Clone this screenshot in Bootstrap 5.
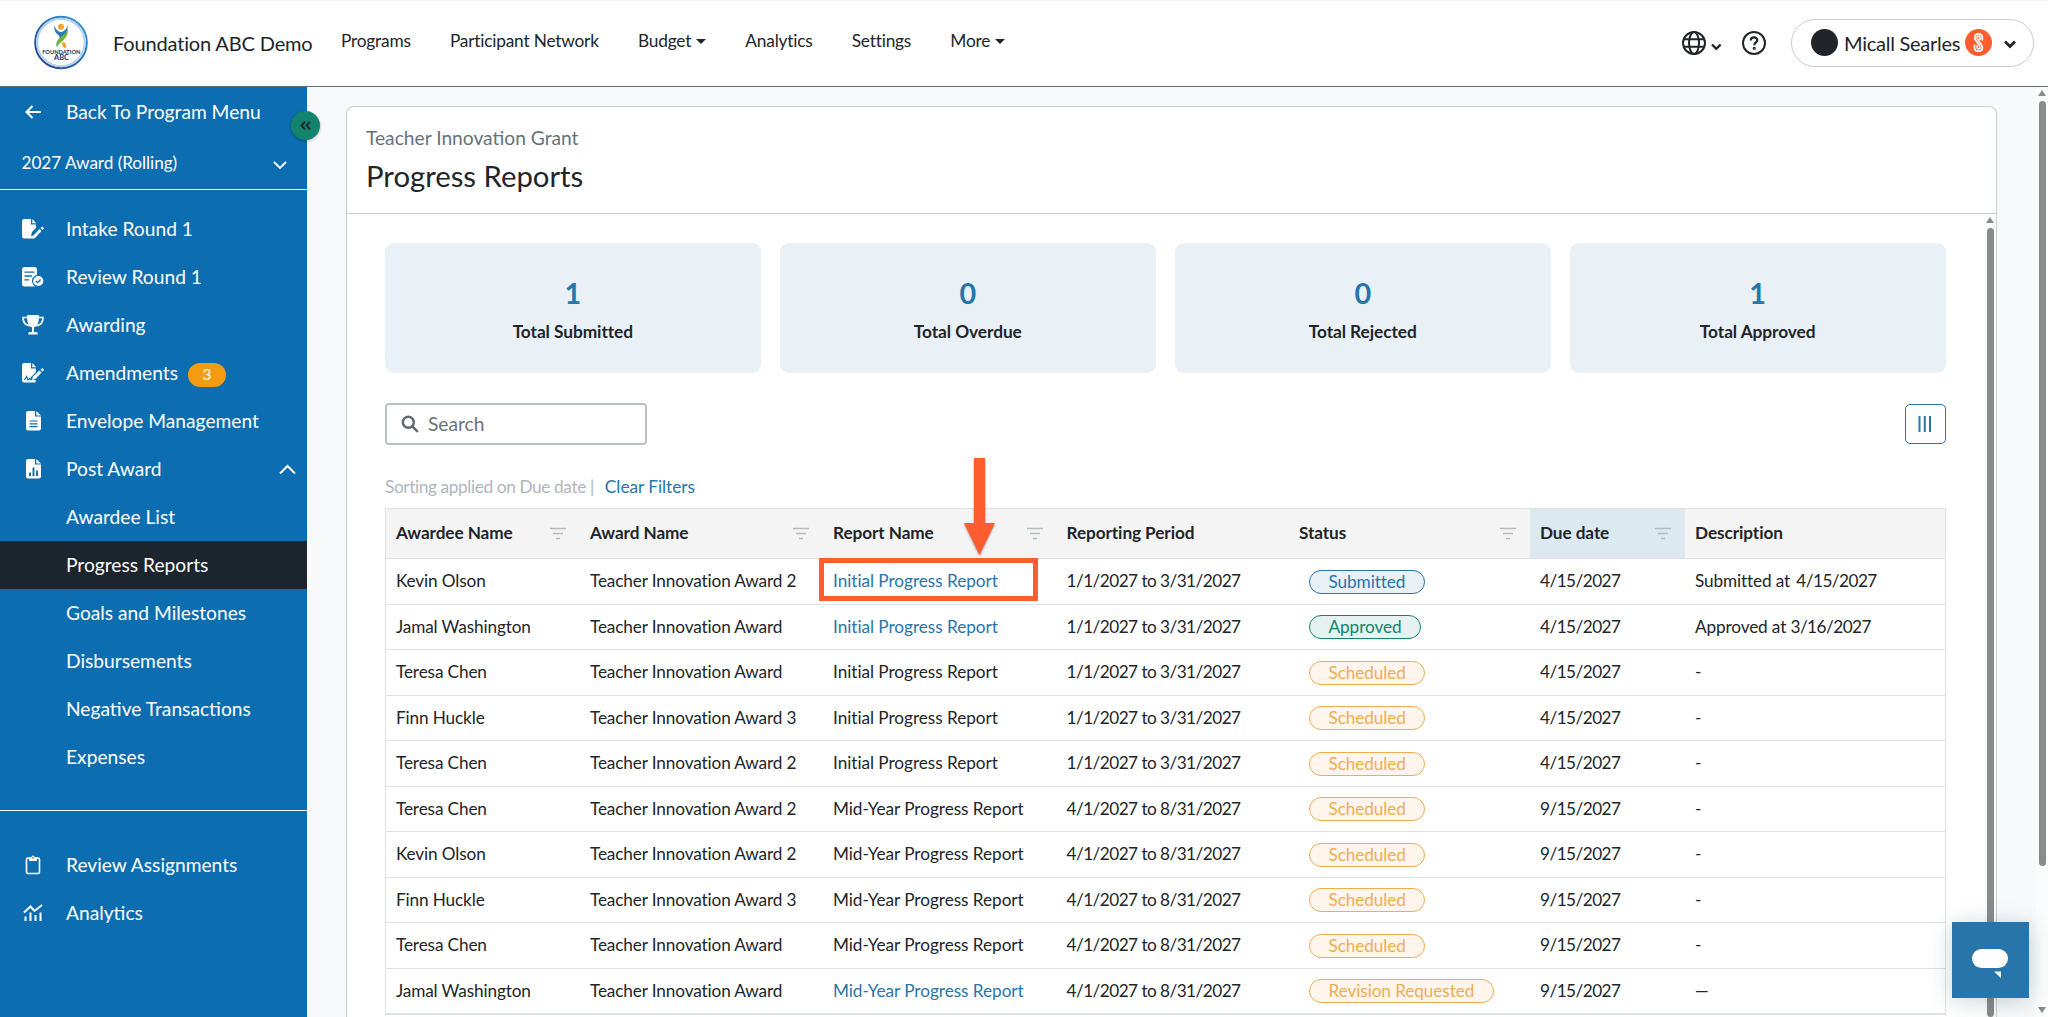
<!DOCTYPE html>
<html lang="en">
<head>
<meta charset="utf-8">
<title>Progress Reports</title>
<link href="https://cdn.jsdelivr.net/npm/bootstrap@5.3.0/dist/css/bootstrap.min.css" rel="stylesheet">
<style>
body{font-family:Lato,"Liberation Sans",sans-serif;color:#212529;background:#f8f9fb;height:1017px;overflow:hidden;line-height:1.2}
a{text-decoration:none;color:inherit}
svg{display:block;flex:none}
.topbar{height:87px;border-bottom:1px solid #5f6b76;border-top:1px solid #fff3f3;background:#fff;flex:none;padding-bottom:2px}
.brand-logo{margin-left:34px;width:54px}
.brand-text{font-size:20px;letter-spacing:-.15px;margin-left:25px;width:199px;white-space:nowrap}
.main-nav{margin-left:29px;gap:39.2px;font-size:17.3px;letter-spacing:-.2px;margin-top:-3px}
.caret{display:inline-block;border:5px solid transparent;border-top-color:#212529;border-bottom:0;margin-left:5px;vertical-align:3px}
.user-pill{width:243px;height:48px;border:1px solid #c9cbcd;border-radius:24px;font-size:20px;padding-left:19px;margin-right:14px}
.user-dot{width:27px;height:27px;border-radius:50%;background:#212529}
.user-name{margin:0 6px;width:115px;white-space:nowrap;letter-spacing:-.25px}
.help-ico{margin:0 24px 0 19px}
.side{width:307px;background:#0d6db1;color:#fff;flex:none;position:relative;font-size:19.2px}
.side-cycle{height:53px;font-size:17.2px;letter-spacing:-.05px;padding:2px 20px 0 21.5px}
.side-line{height:1px;background:#fff}
.side a.item{height:48px;display:flex;align-items:center;padding-right:11px}
.side a.side-back{height:49px}
.side .ico{width:66px;flex:none;display:flex;justify-content:center}
.side .back-arrow{width:51px;margin-right:15px;padding-left:0}
.side a.current{background:#1c252e}
.side-foot{margin:29px 0 30px}
.count{background:#f39c12;border-radius:12px;width:38px;height:24px;font-size:15.4px;margin-left:10px;margin-top:3px}
.collapse-btn{position:absolute;left:291px;top:24px;width:29px;height:29px;border-radius:50%;background:#12836d;box-shadow:0 1px 3px rgba(0,0,0,.3);z-index:3}
.content-col{padding:19px 39px 0 39px}
.panel{background:#fff;border:1px solid #cbcdcf;border-radius:8px 8px 0 0;border-bottom:0}
.panel-head{height:107px;border-bottom:1px solid #cbcdcf;padding:19px 19px 0}
.crumb{font-size:19.2px;color:#66727b;line-height:24px}
.title{font-size:29.3px;line-height:36px;margin:7.5px 0 0;font-weight:400}
.panel-main{padding:29px 0 0 38px}
.stats{gap:19.3px;width:1560.5px}
.stat{height:130px;background:#e9f0f6;border-radius:9px;flex:1 1 0;padding-top:32px}
.stat b{display:block;font-size:28.8px;line-height:36px;color:#2775ab}
.stat span{display:block;font-size:17.3px;letter-spacing:-.06px;font-weight:700;line-height:22px;margin-top:9.5px}
.tools{margin-top:29px;height:43px;width:1560.5px}
.searchbox{width:262px;height:42px;border:2px solid #bbc0c5;border-radius:4px;padding-left:14px;gap:9px;font-size:19.2px;color:#6c7378}
.cols-btn{width:41px;height:40px;border:1.5px solid #2775ab;border-radius:5px}
.sortline{margin-top:30.5px;height:32.5px;font-size:17.3px;color:#b0b6bb;line-height:22px}
.sortline span{letter-spacing:-.4px}
.sortline a{margin-left:11px;letter-spacing:-.05px}
.sortline a,.grid a{color:#2775ab}
.grid{table-layout:fixed;width:1560.5px;border-collapse:separate;border-spacing:0;border:1px solid #dee2e6;font-size:17.2px;margin:0}
.grid th{height:50px;background:#f4f4f4;padding:0 14px 0 10px;border-bottom:1px solid #dee2e6;font-weight:700;letter-spacing:-.08px}
.grid th.sorted{background:#dde9f1}
.grid td{height:45.5px;padding:0 0 0 10px;border-bottom:1px solid #dee2e6;white-space:nowrap;line-height:22px;letter-spacing:-.13px}
.grid td:nth-child(3){letter-spacing:-.04px}
.grid td .num{letter-spacing:-.54px}
.pill{display:inline-block;height:24px;line-height:21px;border:1px solid;border-radius:12px;padding:0 18.5px;margin-left:10px;vertical-align:middle;letter-spacing:-.08px}
.p-sub{color:#2775ab;background:#e9f0f6}
.p-app{color:#12836d;background:#e6f2ef}
.p-sch{color:#f2ac50;background:#fef6ec}
.vbar{width:12px;flex:none;background:#fcfcfc;display:flex;flex-direction:column;align-items:center}
.vbar i{display:block;width:7px;background:#8b8b8b;border-radius:4px}
.vbar .up{margin:3px 0 5px}
.vbar .page-thumb{height:765px}
.inner-bar{margin-left:auto}
.box-note{position:absolute;left:472px;top:344px;width:218.5px;height:43px;border:5.5px solid #ff5c2f}
.arrow-note{position:absolute;left:612px;top:241px;filter:drop-shadow(0 1px 1px rgba(0,0,0,.4))}
.chat{position:absolute;left:1952px;top:922px;width:77px;height:76px;background:#2775ab;box-shadow:0 3px 22px rgba(0,60,60,.22);z-index:5}
</style>
<script src="https://cdn.jsdelivr.net/npm/bootstrap@5.3.0/dist/js/bootstrap.bundle.min.js"></script>
</head>
<body class="d-flex flex-column">
<header class="topbar d-flex align-items-center">
  <svg class="brand-logo" height="55" viewBox="0 0 55 55">
    <defs><linearGradient id="ring" x1="0" y1="1" x2="1" y2="0"><stop offset="0" stop-color="#27357f"/><stop offset="1" stop-color="#2fa3dc"/></linearGradient></defs>
    <circle cx="27.500" cy="27.500" r="26.300" fill="#fff" stroke="url(#ring)" stroke-width="2"/>
    <circle cx="27.500" cy="27.500" r="24.200" fill="none" stroke="#b4d2ee" stroke-width="2.200"/>
    <circle cx="27.500" cy="11.500" r="3" fill="#f6a12b"/>
    <path d="M21 9.500c.5 4.500 3 6.500 6.500 7.500 3.500-1 6-3 6.500-7.500 1 6-1 8.500-4.500 11l-1.500 4.500c-1.500-1-2-3-2.500-4.500C22 18 20 15.500 21 9.500z" fill="#2b78b8"/>
    <path d="M34.500 14c.5 6-2.500 9-5.500 12-3 2.500-5 4-5.500 7-2-4.500 0-7.500 3-10.500 3.500-3.500 6.500-4.500 8-8.500z" fill="#6cb33f"/>
    <path d="M29.500 26.500c3 1.500 4 4 2.500 7-3-1.500-4.500-3.500-2.500-7z" fill="#f6a12b"/>
    <text x="27.800" y="38.800" font-size="5.700" font-weight="700" fill="#20305f" text-anchor="middle" textLength="39" lengthAdjust="spacingAndGlyphs">FOUNDATION</text>
    <text x="28" y="45.700" font-size="6.600" font-weight="700" fill="#20305f" text-anchor="middle" textLength="15" lengthAdjust="spacingAndGlyphs">ABC</text>
  </svg>
  <div class="brand-text">Foundation ABC Demo</div>
  <nav class="main-nav d-flex">
    <a href="#">Programs</a><a href="#">Participant Network</a><a href="#">Budget<span class="caret"></span></a><a href="#">Analytics</a><a href="#">Settings</a><a href="#">More<span class="caret"></span></a>
  </nav>
  <div class="d-flex align-items-center ms-auto">
    <svg width="26" height="26" viewBox="0 0 26 26" fill="none" stroke="#212529" stroke-width="2"><circle cx="13" cy="13" r="11"/><ellipse cx="13" cy="13" rx="5" ry="11"/><path d="M3 9.300h20M3 16.700h20"/></svg>
    <svg class="mt-2 ms-1" width="11" height="8" viewBox="0 0 11 8" fill="none" stroke="#212529" stroke-width="2.400"><path d="M1 1.500l4.300 4.300 4.300-4.300"/></svg>
    <svg class="help-ico" width="26" height="26" viewBox="0 0 26 26" fill="none" stroke="#212529" stroke-width="2"><circle cx="13" cy="13" r="11"/><path d="M9.700 10.500c0-4.200 6.600-4 6.600-.3 0 2.200-3 2.300-3 5" stroke-width="2.200"/><circle cx="13.200" cy="18.300" r=".6"/></svg>
    <div class="user-pill d-flex align-items-center">
      <span class="user-dot"></span><span class="user-name">Micall Searles</span>
      <svg width="27" height="27" viewBox="0 0 27 27"><circle cx="13.500" cy="13.500" r="13.500" fill="#ff5c2f"/><g fill="none" stroke="#fff" stroke-width="1.700" stroke-linecap="round"><path d="M17.300 10.800V8.600c0-5-7.600-5-7.600 0 0 3.500 5.400 6.700 5.400 9.900 0 2-2.900 2-2.900 0v-1.800"/><path d="M9.500 16.200v2.200c0 5 7.900 5 7.900 0 0-3.500-5.300-6.700-5.300-9.900 0-2 2.900-2 2.900 0v1.800"/></g></svg>
      <svg class="mt-1" style="margin-left:12px" width="12" height="9" viewBox="0 0 12 9" fill="none" stroke="#212529" stroke-width="2.800"><path d="M1 1.500l5 5 5-5"/></svg>
    </div>
  </div>
</header>
<div class="d-flex flex-grow-1">
  <aside class="side">
    <a href="#" class="item side-back"><span class="ico back-arrow"><svg width="16" height="14" viewBox="0 0 16 14" fill="none" stroke="#fff" stroke-width="2.100" transform="translate(7 0)"><path d="M16 7H1.500M7.500 1L1.500 7l6 6"/></svg></span>Back To Program Menu</a>
    <div class="side-cycle d-flex align-items-center justify-content-between"><span>2027 Award (Rolling)</span><svg class="mt-1" width="14" height="9" viewBox="0 0 14 9" fill="none" stroke="#fff" stroke-width="1.800"><path d="M1 1l6 6 6-6"/></svg></div>
    <div class="side-line"></div>
    <div style="height:15px"></div>
    <a href="#" class="item"><span class="ico"><svg width="22" height="20" viewBox="0 0 22 20" fill="#fff"><path d="M2 0h7v5.500h5V9l-4 4-1 4 3-.5 1-.5v2.500q0 1-1.500 1H2q-2 0-2-2V2q0-2 2-2z"/><path d="M10.300 0l4 4.200h-4z"/><path d="M18.500 9l2-1.500 1.500 2-1.500 1.500zM17.500 10l2 2-6 6.500-3 1 1-3z"/></svg></span>Intake Round 1</a>
    <a href="#" class="item"><span class="ico"><svg width="22" height="20" viewBox="0 0 22 20"><rect width="15" height="19.500" rx="2.500" fill="#fff"/><path d="M2.500 5.200h10M2.500 9h7.500M2.500 12.800h4.500" stroke="#0d6db1" stroke-width="1.300"/><circle cx="16.300" cy="14" r="5.700" fill="#fff" stroke="#0d6db1" stroke-width="1.200"/><path d="M13.800 14l1.800 1.700 3-3.200" fill="none" stroke="#0d6db1" stroke-width="1.300"/></svg></span>Review Round 1</a>
    <a href="#" class="item"><span class="ico"><svg width="22" height="20" viewBox="0 0 22 20" fill="#fff"><path d="M5 0h12c0 8-1.500 11-5 12.500V17h3l1 2.500H6L7 17h3v-4.500C6.500 11 5 8 5 0z"/><path d="M5 2.500H1c0 5 2 7.500 6.500 8.300M17 2.500h4c0 5-2 7.500-6.500 8.300" fill="none" stroke="#fff" stroke-width="1.700"/></svg></span>Awarding</a>
    <a href="#" class="item"><span class="ico"><svg width="22" height="20" viewBox="0 0 22 20" fill="#fff"><path d="M2 0h7v5.500h5V9l-5 5-1 3h4l2 .5v1q0 1-1.500 1H2q-2 0-2-2V2q0-2 2-2z"/><path d="M10.300 0l4 4.200h-4z"/><path d="M18.500 6.500l2-1.500 1.500 2-1.500 1.500zM17.500 7.500l2 2-6 6.500-3.500 1 1-3.500z"/><path d="M2.500 17l2-3.500L6 17l1.500-1.500L9 17" fill="none" stroke="#0d6db1" stroke-width="1.200"/></svg></span>Amendments<span class="count d-flex align-items-center justify-content-center">3</span></a>
    <a href="#" class="item"><span class="ico"><svg width="15" height="20" viewBox="0 0 15 20"><path d="M2 0h7v5.500h6v12q0 2-2 2H2q-2 0-2-2V2q0-2 2-2z" fill="#fff"/><path d="M10.300 0L15 4.400h-4.700z" fill="#fff"/><path d="M3.500 10h8M3.500 12.800h8M3.500 15.600h8" stroke="#0d6db1" stroke-width="1.200"/></svg></span>Envelope Management</a>
    <a href="#" class="item"><span class="ico"><svg width="15" height="20" viewBox="0 0 15 20"><path d="M2 0h7v5.500h6v12q0 2-2 2H2q-2 0-2-2V2q0-2 2-2z" fill="#fff"/><path d="M10.300 0L15 4.400h-4.700z" fill="#fff"/><path d="M4 13.500V17M7.500 8.500V17M11 11.500V17" stroke="#0d6db1" stroke-width="1.900"/></svg></span>Post Award<svg class="ms-auto" width="17" height="11" viewBox="0 0 17 11" fill="none" stroke="#fff" stroke-width="2"><path d="M1 9.500l7.500-7.500L16 9.500"/></svg></a>
    <a href="#" class="item"><span class="ico"></span>Awardee List</a>
    <a href="#" class="item current"><span class="ico"></span>Progress Reports</a>
    <a href="#" class="item"><span class="ico"></span>Goals and Milestones</a>
    <a href="#" class="item"><span class="ico"></span>Disbursements</a>
    <a href="#" class="item"><span class="ico"></span>Negative Transactions</a>
    <a href="#" class="item"><span class="ico"></span>Expenses</a>
    <div class="side-line side-foot"></div>
    <a href="#" class="item"><span class="ico"><svg width="16" height="20" viewBox="0 0 16 20" fill="none" stroke="#fff"><rect x="1.500" y="3" width="13" height="15.500" rx="1.500" stroke-width="1.600"/><path d="M4 2.500h2Q8-1.500 10 2.500h2V6H4z" fill="#fff" stroke="none"/><circle cx="8" cy="2.700" r=".8" fill="#0d6db1" stroke="none"/></svg></span>Review Assignments</a>
    <a href="#" class="item"><span class="ico"><svg width="20" height="18" viewBox="0 0 20 18" fill="none" stroke="#fff" stroke-width="2"><path d="M1 8.500l6.500-6 4 4.500L19 1"/><path d="M2.500 12.500V17M7.500 8.500V17M12.500 11V17M17.500 8.500V17"/></svg></span>Analytics</a>
    <div class="collapse-btn d-flex align-items-center justify-content-center"><svg width="11" height="9" viewBox="0 0 11 9" fill="none" stroke="#212529" stroke-width="1.900"><path d="M5 .7L1.500 4.500 5 8.300M10 .7L6.500 4.500 10 8.300"/></svg></div>
  </aside>
  <div class="content-col flex-grow-1 d-flex">
    <section class="panel flex-grow-1 d-flex flex-column">
      <div class="panel-head"><div class="crumb">Teacher Innovation Grant</div><h1 class="title">Progress Reports</h1></div>
      <div class="d-flex flex-grow-1 position-relative">
        <div class="panel-main">
          <div class="stats d-flex text-center">
            <div class="stat"><b>1</b><span>Total Submitted</span></div>
            <div class="stat"><b>0</b><span>Total Overdue</span></div>
            <div class="stat"><b>0</b><span>Total Rejected</span></div>
            <div class="stat"><b>1</b><span>Total Approved</span></div>
          </div>
          <div class="tools d-flex justify-content-between align-items-center">
            <div class="searchbox d-flex align-items-center"><svg width="18" height="18" viewBox="0 0 18 18" fill="none" stroke="#5f6b73" stroke-width="2.500"><circle cx="7.300" cy="7.300" r="5.500"/><path d="M11.300 11.300l5.500 5.500"/></svg>Search</div>
            <div class="cols-btn d-flex align-items-center justify-content-center"><svg width="14" height="16" viewBox="0 0 14 16" stroke="#2775ab" stroke-width="2"><path d="M1.500 0v16M6.800 0v16M12 0v16"/></svg></div>
          </div>
          <div class="sortline"><span>Sorting applied on Due date |</span><a href="#">Clear Filters</a></div>
          <table class="grid">
            <colgroup><col style="width:194px"><col style="width:243px"><col style="width:233.500px"><col style="width:232.500px"><col style="width:241px"><col style="width:155px"><col></colgroup>
            <thead><tr id="heads"></tr></thead>
            <tbody id="rows"></tbody>
          </table>
        </div>
        <div class="vbar inner-bar"><svg width="8" height="6" class="up" viewBox="0 0 8 6"><path d="M4 0l4 6H0z" fill="#8b8b8b"/></svg><i class="flex-grow-1"></i></div>
        <div class="box-note"></div>
        <svg class="arrow-note" width="40" height="104" viewBox="0 0 40 104"><path d="M15 3h11v65h10L20.500 100 5 68h10z" fill="#ff5c2f"/></svg>
      </div>
    </section>
  </div>
  <div class="vbar"><svg width="8" height="6" class="up" viewBox="0 0 8 6"><path d="M4 0l4 6H0z" fill="#8b8b8b"/></svg><i class="page-thumb"></i><svg width="8" height="6" class="mt-auto mb-1" viewBox="0 0 8 6"><path d="M4 6l4-6H0z" fill="#8b8b8b"/></svg></div>
</div>
<div class="chat"><svg width="77" height="76" viewBox="0 0 77 76" fill="#fff"><rect x="20" y="27" width="36" height="19" rx="9.500"/><path d="M42 49.500h7V56z"/></svg></div>
<script>
const heads=[["Awardee Name",1],["Award Name",1],["Report Name",1],["Reporting Period",0],["Status",1],["Due date",1],["Description",0]];
const funnel='<svg width="16" height="13" viewBox="0 0 16 13" stroke="#b5babe" stroke-width="1.700"><path d="M0 1.500h16M3 6.500h10M6 11.500h4"/></svg>';
document.getElementById("heads").innerHTML=heads.map(([t,f])=>`<th class="${t==="Due date"?"sorted":""}"><div class="d-flex justify-content-between align-items-center">${t}${f?funnel:""}</div></th>`).join("");
const q1="1/1/2027 to 3/31/2027",q2="4/1/2027 to 8/31/2027",I="Initial Progress Report",M="Mid-Year Progress Report",T="Teacher Innovation Award";
const rows=[
["Kevin Olson",T+" 2",I,q1,"Submitted","4/15/2027","Submitted at&thinsp; <span class='num'>4/15/2027</span>",1],
["Jamal Washington",T,I,q1,"Approved","4/15/2027","Approved at <span class='num'>3/16/2027</span>",1],
["Teresa Chen",T,I,q1,"Scheduled","4/15/2027","-"],
["Finn Huckle",T+" 3",I,q1,"Scheduled","4/15/2027","-"],
["Teresa Chen",T+" 2",I,q1,"Scheduled","4/15/2027","-"],
["Teresa Chen",T+" 2",M,q2,"Scheduled","9/15/2027","-"],
["Kevin Olson",T+" 2",M,q2,"Scheduled","9/15/2027","-"],
["Finn Huckle",T+" 3",M,q2,"Scheduled","9/15/2027","-"],
["Teresa Chen",T,M,q2,"Scheduled","9/15/2027","-"],
["Jamal Washington",T,M,q2,"Revision Requested","9/15/2027","—",1]];
const kinds={Submitted:"p-sub",Approved:"p-app"};
document.getElementById("rows").innerHTML=rows.map(r=>`<tr><td>${r[0]}</td><td>${r[1]}</td><td>${r[7]?`<a href="#">${r[2]}</a>`:r[2]}</td><td><span class="num">${r[3]}</span></td><td><span class="pill ${kinds[r[4]]||"p-sch"}">${r[4]}</span></td><td><span class="num">${r[5]}</span></td><td>${r[6]}</td></tr>`).join("");
</script>
</body>
</html>
